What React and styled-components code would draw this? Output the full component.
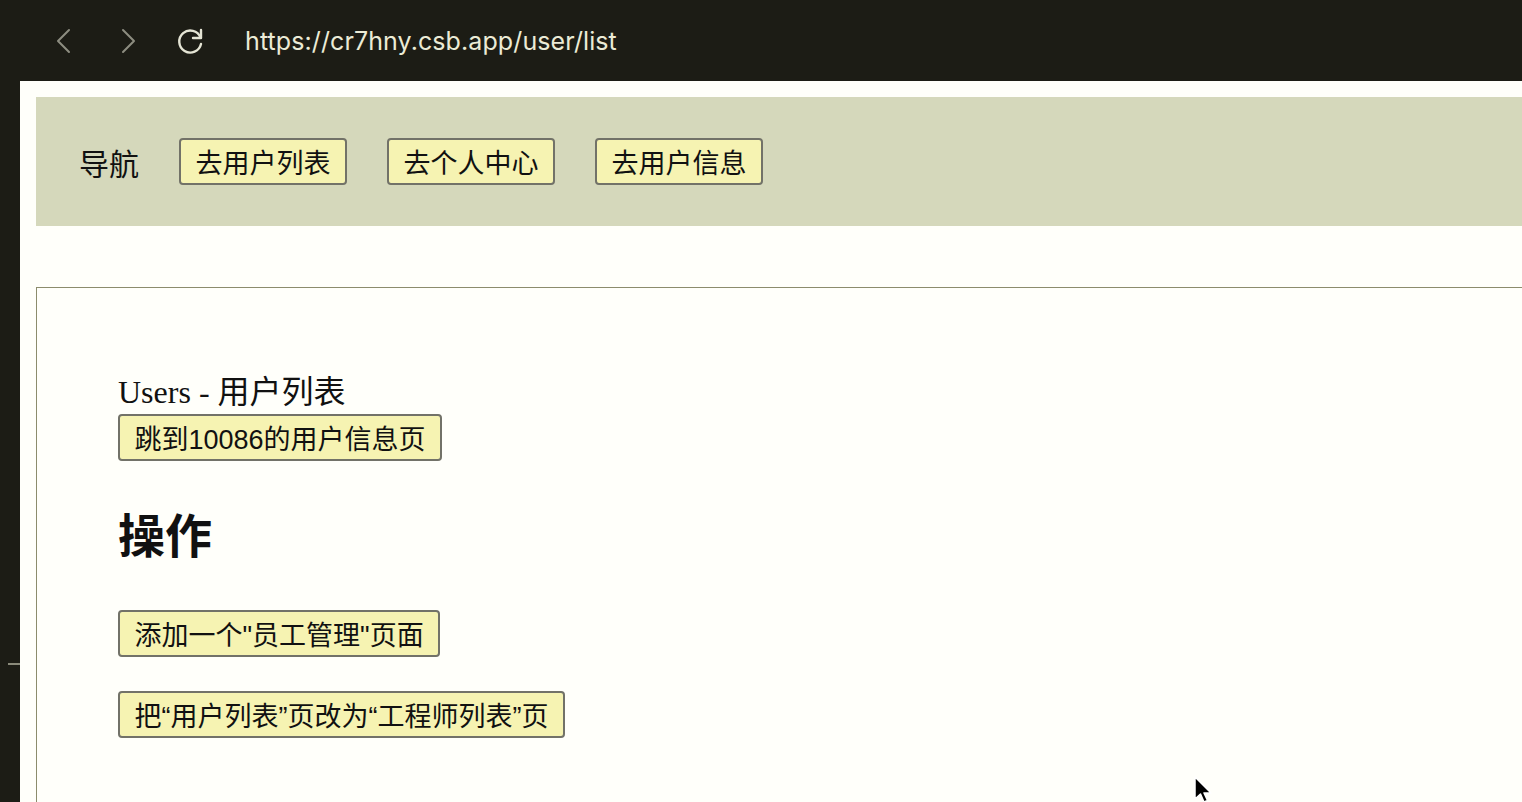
import React from "react";
import styled, { createGlobalStyle } from "styled-components";

const Global = createGlobalStyle`
  html, body { margin: 0; padding: 0; background: #1c1c15; overflow: hidden; }
  #root { width: 1522px; height: 802px; }
`;

const Window = styled.div`
  width: 1522px;
  height: 802px;
  display: flex;
  flex-direction: column;
  background: #1c1c15;
  position: relative;
  overflow: hidden;
`;

const TopBar = styled.div`
  height: 81px;
  flex: none;
  display: flex;
  align-items: center;
  padding-left: 52px;
  box-sizing: border-box;
`;

const NavIcon = styled.button`
  background: none;
  border: none;
  padding: 0;
  margin-right: ${(p) => p.$gap}px;
  display: flex;
  align-items: center;
  justify-content: center;
  color: ${(p) => p.$color};
`;

const Url = styled.div`
  font-family: "Inter", "Roboto", sans-serif;
  font-size: 25px;
  color: #ebebd6;
  letter-spacing: 0.1px;
`;

const Body = styled.div`
  flex: 1;
  display: flex;
  min-height: 0;
`;

const LeftStrip = styled.div`
  width: 20px;
  flex: none;
  display: flex;
  flex-direction: column;
  align-items: flex-end;
`;

const StripMark = styled.div`
  width: 12px;
  height: 2px;
  margin-top: 582px;
  background: #8a8a7a;
`;

const Page = styled.div`
  flex: 1;
  background: #fffffa;
  padding: 16px 0 0 16px;
  display: flex;
  flex-direction: column;
  min-width: 0;
`;

const NavBar = styled.nav`
  height: 129px;
  flex: none;
  background: #d5d8bb;
  display: flex;
  align-items: center;
  gap: 40px;
  padding-left: 43px;
`;

const NavLabel = styled.span`
  font-family: "Liberation Serif", "Noto Sans CJK SC", serif;
  font-size: 30px;
  color: #111;
`;

const Btn = styled.button`
  height: 47px;
  box-sizing: border-box;
  padding: 0 14.5px;
  border: 2px solid #727268;
  border-radius: 4px;
  background: #f6f3b2;
  font-family: "Liberation Sans", "Noto Sans CJK SC", sans-serif;
  font-size: 27px;
  color: #111;
  cursor: pointer;
  margin-top: ${(p) => p.$mt || 0}px;
  white-space: nowrap;
`;

const Box = styled.section`
  margin-top: 61px;
  flex: 1;
  border: 1px solid #8c8c6c;
  border-right: none;
  border-bottom: none;
  padding: 84px 0 0 81px;
  display: flex;
  flex-direction: column;
  align-items: flex-start;
`;

const Title = styled.div`
  font-family: "Liberation Serif", "Noto Sans CJK SC", serif;
  font-size: 32px;
  line-height: 40px;
  color: #111;
`;

const Heading = styled.h2`
  margin: 49px 0 46px;
  font-family: "Liberation Serif", "Noto Sans CJK SC", serif;
  font-size: 47px;
  line-height: 54px;
  font-weight: 700;
  color: #111;
`;

const Cursor = styled.svg`
  position: absolute;
  left: 1193px;
  top: 775px;
`;

export default function App() {
  return (
    <Window>
      <Global />
      <TopBar>
        <NavIcon $gap={40} $color="#8d8d80" aria-label="back">
          <svg width="24" height="28" viewBox="0 0 24 28" fill="none">
            <path d="M17 3 L6 14 L17 25" stroke="currentColor" strokeWidth="2" strokeLinecap="round" strokeLinejoin="round" />
          </svg>
        </NavIcon>
        <NavIcon $gap={36} $color="#8d8d80" aria-label="forward">
          <svg width="24" height="28" viewBox="0 0 24 28" fill="none">
            <path d="M7 3 L18 14 L7 25" stroke="currentColor" strokeWidth="2" strokeLinecap="round" strokeLinejoin="round" />
          </svg>
        </NavIcon>
        <NavIcon $gap={39} $color="#e4e4d4" aria-label="reload">
          <svg width="30" height="30" viewBox="0 0 30 30" fill="none">
            <path d="M24.5 11.5 A11 11 0 1 0 25 18" stroke="currentColor" strokeWidth="2.4" strokeLinecap="round" />
            <path d="M25 4 L25 12 L17 12" stroke="currentColor" strokeWidth="2.4" strokeLinecap="round" strokeLinejoin="round" />
          </svg>
        </NavIcon>
        <Url>https://cr7hny.csb.app/user/list</Url>
      </TopBar>
      <Body>
        <LeftStrip>
          <StripMark />
        </LeftStrip>
        <Page>
          <NavBar>
            <NavLabel>导航</NavLabel>
            <Btn>去用户列表</Btn>
            <Btn>去个人中心</Btn>
            <Btn>去用户信息</Btn>
          </NavBar>
          <Box>
            <Title>Users - 用户列表</Title>
            <Btn $mt={2}>跳到10086的用户信息页</Btn>
            <Heading>操作</Heading>
            <Btn>添加一个"员工管理"页面</Btn>
            <Btn $mt={34}>把“用户列表”页改为“工程师列表”页</Btn>
          </Box>
        </Page>
      </Body>
      <Cursor width="22" height="30" viewBox="0 0 22 30">
        <path d="M2 2 L2 24 L7.5 19 L11 27 L14.5 25.5 L11 18 L18 18 Z" fill="#000" stroke="#fff" strokeWidth="1.5" strokeLinejoin="round" />
      </Cursor>
    </Window>
  );
}
